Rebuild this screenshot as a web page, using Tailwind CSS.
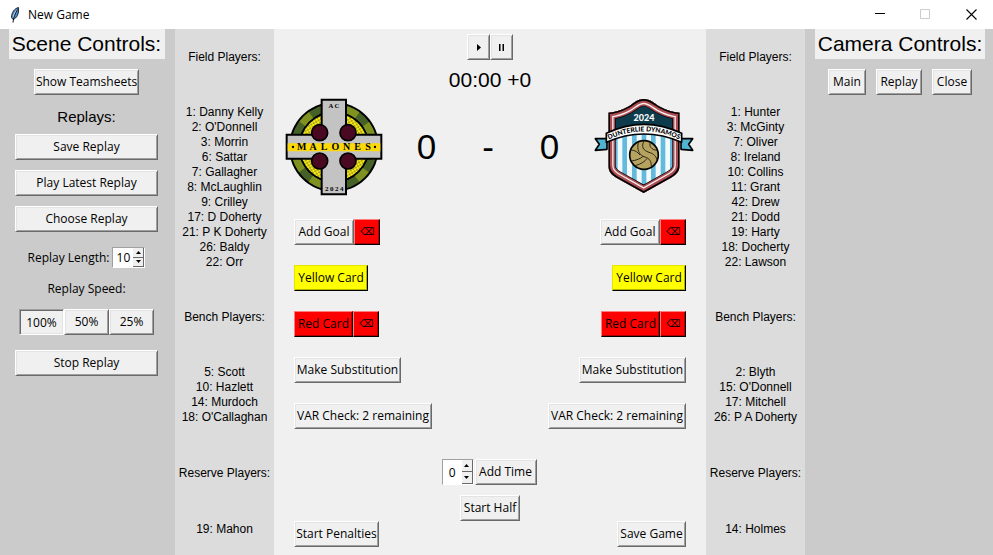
<!DOCTYPE html>
<html lang="en">
<head>
<meta charset="utf-8">
<meta name="viewport" content="width=device-width, initial-scale=1">
<title>New Game</title>
<script src="https://cdn.jsdelivr.net/npm/@tailwindcss/browser@4"></script>
</head>
<body class="flex min-h-screen flex-col bg-[#f0f0f0] font-['Open_Sans','Noto_Sans',sans-serif] text-xs text-black">

<!-- Window title bar -->
<header class="flex h-[29px] items-center bg-white">
  <svg class="ml-2 h-4 w-4" viewBox="0 0 16 16" aria-hidden="true">
    <path d="M10.500 .5C6.500 1.500 3.500 5.500 3.500 10.500L5 12.500C9 11 11 7 10.500 .5Z" fill="#4f86c6" stroke="#16263a" stroke-width="1"/>
    <path d="M9 3C6.500 6 5.500 9 5.200 11" fill="none" stroke="#b9dcf7" stroke-width="1.300"/>
    <path d="M9.500 2.500C7 7 5.500 10 5 15.500" fill="none" stroke="#111" stroke-width="1"/>
  </svg>
  <h1 class="ml-1 flex-1">New Game</h1>
  <button class="flex h-full w-[45px] items-center justify-center" aria-label="Minimize">
    <svg class="h-[11px] w-[11px]" viewBox="0 0 11 11"><path d="M0 4.500H10" stroke="#000"/></svg>
  </button>
  <button class="flex h-full w-[45px] items-center justify-center" aria-label="Maximize" disabled>
    <svg class="h-[11px] w-[11px]" viewBox="0 0 11 11"><path d="M.5 .5H9.500V9.500H.5Z" fill="none" stroke="#ccc"/></svg>
  </button>
  <button class="flex h-full w-[45px] items-center justify-center pl-0.5" aria-label="Close window">
    <svg class="h-[11px] w-[11px]" viewBox="0 0 11 11"><path d="M.5 .5L10.500 10.500M10.500 .5L.5 10.500" stroke="#000" stroke-width="1.100"/></svg>
  </button>
</header>

<main class="grid flex-1 grid-cols-[175px_99px_1fr_99px_188px]">

  <!-- Scene controls -->
  <section class="flex flex-col items-center bg-[#cbcbcb] pr-0.5">
    <h2 class="flex h-[30px] w-[156px] items-center justify-center whitespace-nowrap bg-[#f0f0f0] font-['Liberation_Sans',Arial,sans-serif] text-[21px] leading-[30px]">Scene Controls:</h2>
    <button class="mt-2.5 h-[26px] w-[105px] whitespace-nowrap border border-t-white border-l-white border-r-[#696969] border-b-[#696969] bg-[#f0f0f0] leading-none shadow-[inset_1px_1px_#e3e3e3,inset_-1px_-1px_#a0a0a0]">Show Teamsheets</button>
    <h3 class="mt-3 font-['Liberation_Sans',Arial,sans-serif] text-[15px] leading-5">Replays:</h3>
    <div class="mt-[7px] flex flex-col gap-2.5">
      <button class="h-[26px] w-[143px] border border-t-white border-l-white border-r-[#696969] border-b-[#696969] bg-[#f0f0f0] leading-none shadow-[inset_1px_1px_#e3e3e3,inset_-1px_-1px_#a0a0a0]">Save Replay</button>
      <button class="h-[26px] w-[143px] border border-t-white border-l-white border-r-[#696969] border-b-[#696969] bg-[#f0f0f0] leading-none shadow-[inset_1px_1px_#e3e3e3,inset_-1px_-1px_#a0a0a0]">Play Latest Replay</button>
      <button class="h-[26px] w-[143px] border border-t-white border-l-white border-r-[#696969] border-b-[#696969] bg-[#f0f0f0] leading-none shadow-[inset_1px_1px_#e3e3e3,inset_-1px_-1px_#a0a0a0]">Choose Replay</button>
    </div>
    <div class="mt-[15px] flex items-center gap-[3px]">
      <label for="length" class="whitespace-nowrap">Replay Length:</label>
      <div class="flex h-[21px] w-[33px] border border-t-[#a0a0a0] border-l-[#a0a0a0] border-r-white border-b-white bg-white">
        <input id="length" type="text" inputmode="numeric" value="10" class="w-5 min-w-0 text-center leading-none outline-none">
        <div class="flex w-[11px] flex-col">
          <button aria-label="Increase length" class="flex flex-1 items-center justify-center border-r border-b border-[#696969] bg-[#f0f0f0]"><svg class="h-[3px] w-[5px]" viewBox="0 0 5 3"><path d="M0 3L2.500 0L5 3Z"/></svg></button>
          <button aria-label="Decrease length" class="flex flex-1 items-center justify-center border-r border-b border-[#696969] bg-[#f0f0f0]"><svg class="h-[3px] w-[5px]" viewBox="0 0 5 3"><path d="M0 0L2.500 3L5 0Z"/></svg></button>
        </div>
      </div>
    </div>
    <h3 class="mt-[13px] leading-4">Replay Speed:</h3>
    <div class="mt-3 flex">
      <button aria-pressed="true" class="h-[26px] w-[45px] border border-t-[#a0a0a0] border-l-[#a0a0a0] border-r-white border-b-white bg-[#f0f0f0] pt-0.5 leading-none shadow-[inset_1px_1px_#696969,inset_-1px_-1px_#e3e3e3]">100%</button>
      <button aria-pressed="false" class="h-[26px] w-[45px] border border-t-white border-l-white border-r-[#696969] border-b-[#696969] bg-[#f0f0f0] leading-none shadow-[inset_1px_1px_#e3e3e3,inset_-1px_-1px_#a0a0a0]">50%</button>
      <button aria-pressed="false" class="h-[26px] w-[45px] border border-t-white border-l-white border-r-[#696969] border-b-[#696969] bg-[#f0f0f0] leading-none shadow-[inset_1px_1px_#e3e3e3,inset_-1px_-1px_#a0a0a0]">25%</button>
    </div>
    <button class="mt-[15px] h-[26px] w-[143px] border border-t-white border-l-white border-r-[#696969] border-b-[#696969] bg-[#f0f0f0] leading-none shadow-[inset_1px_1px_#e3e3e3,inset_-1px_-1px_#a0a0a0]">Stop Replay</button>
  </section>

  <!-- Home squad -->
  <section class="bg-[#dcdcdc] pt-[21px] text-center font-['Liberation_Sans',Arial,sans-serif] leading-[15px] whitespace-nowrap">
    <h3>Field Players:</h3>
    <ul class="mt-10">
      <li>1: Danny Kelly</li><li>2: O'Donnell</li><li>3: Morrin</li><li>6: Sattar</li><li>7: Gallagher</li><li>8: McLaughlin</li><li>9: Crilley</li><li>17: D Doherty</li><li>21: P K Doherty</li><li>26: Baldy</li><li>22: Orr</li>
    </ul>
    <h3 class="mt-10">Bench Players:</h3>
    <ul class="mt-10">
      <li>5: Scott</li><li>10: Hazlett</li><li>14: Murdoch</li><li>18: O'Callaghan</li>
    </ul>
    <h3 class="mt-[41px]">Reserve Players:</h3>
    <ul class="mt-[41px]"><li>19: Mahon</li></ul>
  </section>

  <!-- Match panel -->
  <section class="flex flex-col pt-[5px]">
    <div class="flex justify-center">
      <button aria-label="Start clock" class="flex h-[26px] w-[23px] items-center justify-center border border-t-white border-l-white border-r-[#696969] border-b-[#696969] bg-[#f0f0f0] shadow-[inset_1px_1px_#e3e3e3,inset_-1px_-1px_#a0a0a0]"><svg class="h-[7px] w-1" viewBox="0 0 4 7"><path d="M0 0L4 3.500L0 7Z"/></svg></button>
      <button aria-label="Pause clock" class="flex h-[26px] w-[23px] items-center justify-center border border-t-white border-l-white border-r-[#696969] border-b-[#696969] bg-[#f0f0f0] shadow-[inset_1px_1px_#e3e3e3,inset_-1px_-1px_#a0a0a0]"><svg class="h-[7px] w-[5px]" viewBox="0 0 5 7"><path d="M0 0H1.500V7H0ZM3.500 0H5V7H3.500Z"/></svg></button>
    </div>
    <p class="mt-2 text-center font-['Liberation_Sans',Arial,sans-serif] text-[21px] leading-6">00:00 +0</p>

    <div class="mt-[5px] flex items-center pr-3 pl-2.5">
      <svg class="h-[100px] w-[100px]" viewBox="27 21 300 300" role="img" aria-label="AC Malones crest">
        <defs>
          <pattern id="weave" width="12" height="12" patternUnits="userSpaceOnUse" patternTransform="rotate(15)">
            <rect width="12" height="12" fill="#ffec10"/>
            <path d="M0 0L12 12M12 0L0 12" stroke="#66722a" stroke-width="1.700"/>
          </pattern>
        </defs>
        <circle cx="177" cy="171" r="135"/>
        <circle cx="177" cy="171" r="118" fill="none" stroke="#466127" stroke-width="22"/>
        <circle cx="177" cy="171" r="118" fill="none" stroke="#7f921f" stroke-width="22" pathLength="20" stroke-dasharray="1 1"/>
        <circle cx="177" cy="171" r="104" fill="url(#weave)" stroke="#000" stroke-width="5"/>
        <path d="M140 29H213V134H319V206H213V313H140V206H35V134H140Z" fill="#c3c3c3" stroke="#000" stroke-width="6"/>
        <path d="M38 160H316V184H38Z" fill="#fbd90c"/>
        <g fill="#490a21" stroke="#000" stroke-width="5">
          <circle cx="134" cy="128" r="24"/><circle cx="219" cy="128" r="24"/>
          <circle cx="134" cy="213" r="24"/><circle cx="219" cy="213" r="24"/>
        </g>
        <circle cx="54" cy="171" r="3.500"/><circle cx="300" cy="171" r="3.500"/>
        <g font-family="Liberation Serif, serif" font-weight="700" text-anchor="middle">
          <text x="80 114 147 181 215 248 279" y="181" font-size="30">MALONES</text>
          <text x="168 186" y="53" font-size="20">AC</text>
          <text x="155 170 185 200" y="303" font-size="21">2024</text>
        </g>
      </svg>

      <div class="flex flex-1 items-center justify-center gap-[46px] pr-0.5 font-['Liberation_Sans',Arial,sans-serif] text-[35px] leading-10">
        <span>0</span><span>-</span><span>0</span>
      </div>

      <svg class="h-[100px] w-[100px]" viewBox="27 21 300 300" role="img" aria-label="Dunterlie Dynamos crest">
        <defs>
          <path id="shield" d="M176 27C196 27 207 40 225 50C243 60 262 66 284 68V226C284 244 274 254 258 263L176 309L94 263C78 254 70 244 70 226V68C92 66 111 60 129 50C147 40 156 27 176 27Z"/>
          <clipPath id="shieldClip"><use href="#shield"/></clipPath>
          <path id="arc" d="M68 150Q176 98 286 150"/>
        </defs>
        <g clip-path="url(#shieldClip)">
          <path d="M60 20H300V320H60Z" fill="#f4fafc"/>
          <path d="M84 110h14v200h-14zM112 110h14v200h-14zM141 110h14v200h-14zM170 110h14v200h-14zM198 110h14v200h-14zM227 110h14v200h-14zM255 110h14v200h-14z" fill="#62bbdc"/>
          <path d="M60 20H300V130H60Z" fill="#0e3b4c"/>
          <g fill="none">
            <use href="#shield" stroke="#000" stroke-width="44"/>
            <use href="#shield" stroke="#a94b50" stroke-width="40"/>
            <use href="#shield" stroke="#f5eeee" stroke-width="31"/>
            <use href="#shield" stroke="#a94b50" stroke-width="23"/>
            <use href="#shield" stroke="#000" stroke-width="10"/>
          </g>
        </g>
        <g fill="#50b4d2" stroke="#000" stroke-width="5" stroke-linejoin="round">
          <path d="M66 146H31L43 163L31 181L66 178Z"/>
          <path d="M288 146H323L311 163L323 181L288 178Z"/>
          <path d="M64 130Q176 76 290 130V157Q176 107 64 157Z" fill="#fff"/>
        </g>
        <g text-anchor="middle" font-family="Lato, sans-serif" font-weight="900">
          <text x="177" y="93" font-size="27" fill="#fff">2024</text>
          <text font-size="20"><textPath href="#arc" startOffset="50%">DUNTERLIE DYNAMOS</textPath></text>
        </g>
        <circle cx="177" cy="195" r="43" fill="#b7a360" stroke="#000" stroke-width="5"/>
        <g fill="none" stroke="#2d281b" stroke-width="3">
          <path d="M177 153C168 170 174 181 192 187C207 191 215 201 216 211"/>
          <path d="M160 157C155 179 162 196 180 201C193 205 199 213 199 229"/>
          <path d="M137 180C151 180 158 187 165 195M139 213C154 211 167 206 174 199M150 227C168 222 181 214 186 205"/>
          <path d="M196 157C192 169 198 179 216 181"/>
        </g>
      </svg>
    </div>

    <div class="mt-[22px] flex justify-between px-5">
      <div class="flex flex-col items-start gap-5">
        <div class="flex">
          <button class="h-[26px] w-[60px] whitespace-nowrap border border-t-white border-l-white border-r-[#696969] border-b-[#696969] bg-[#f0f0f0] leading-none shadow-[inset_1px_1px_#e3e3e3,inset_-1px_-1px_#a0a0a0]">Add Goal</button>
          <button aria-label="Remove home goal" class="h-[26px] w-[26px] border border-t-[#ff7f7f] border-l-[#ff7f7f] border-r-black border-b-black bg-[#ff0000] font-['DejaVu_Sans',sans-serif] text-[10px] leading-none shadow-[inset_-1px_-1px_#b20000]">⌫</button>
        </div>
        <button class="h-[26px] w-[74px] whitespace-nowrap border border-t-[#e5e500] border-l-[#e5e500] border-r-black border-b-black bg-[#ffff00] leading-none shadow-[inset_-1px_-1px_#b2b200]">Yellow Card</button>
        <div class="flex">
          <button class="h-[26px] w-[59px] whitespace-nowrap border border-t-[#ff7f7f] border-l-[#ff7f7f] border-r-black border-b-black bg-[#ff0000] leading-none shadow-[inset_-1px_-1px_#b20000]">Red Card</button>
          <button aria-label="Remove home red card" class="h-[26px] w-[26px] border border-t-[#ff7f7f] border-l-[#ff7f7f] border-r-black border-b-black bg-[#ff0000] font-['DejaVu_Sans',sans-serif] text-[10px] leading-none shadow-[inset_-1px_-1px_#b20000]">⌫</button>
        </div>
        <button class="h-[26px] w-[107px] whitespace-nowrap border border-t-white border-l-white border-r-[#696969] border-b-[#696969] bg-[#f0f0f0] leading-none shadow-[inset_1px_1px_#e3e3e3,inset_-1px_-1px_#a0a0a0]">Make Substitution</button>
        <button class="h-[26px] w-[138px] whitespace-nowrap border border-t-white border-l-white border-r-[#696969] border-b-[#696969] bg-[#f0f0f0] leading-none shadow-[inset_1px_1px_#e3e3e3,inset_-1px_-1px_#a0a0a0]">VAR Check: 2 remaining</button>
      </div>
      <div class="flex flex-col items-end gap-5">
        <div class="flex">
          <button class="h-[26px] w-[60px] whitespace-nowrap border border-t-white border-l-white border-r-[#696969] border-b-[#696969] bg-[#f0f0f0] leading-none shadow-[inset_1px_1px_#e3e3e3,inset_-1px_-1px_#a0a0a0]">Add Goal</button>
          <button aria-label="Remove away goal" class="h-[26px] w-[26px] border border-t-[#ff7f7f] border-l-[#ff7f7f] border-r-black border-b-black bg-[#ff0000] font-['DejaVu_Sans',sans-serif] text-[10px] leading-none shadow-[inset_-1px_-1px_#b20000]">⌫</button>
        </div>
        <button class="h-[26px] w-[74px] whitespace-nowrap border border-t-[#e5e500] border-l-[#e5e500] border-r-black border-b-black bg-[#ffff00] leading-none shadow-[inset_-1px_-1px_#b2b200]">Yellow Card</button>
        <div class="flex">
          <button class="h-[26px] w-[59px] whitespace-nowrap border border-t-[#ff7f7f] border-l-[#ff7f7f] border-r-black border-b-black bg-[#ff0000] leading-none shadow-[inset_-1px_-1px_#b20000]">Red Card</button>
          <button aria-label="Remove away red card" class="h-[26px] w-[26px] border border-t-[#ff7f7f] border-l-[#ff7f7f] border-r-black border-b-black bg-[#ff0000] font-['DejaVu_Sans',sans-serif] text-[10px] leading-none shadow-[inset_-1px_-1px_#b20000]">⌫</button>
        </div>
        <button class="h-[26px] w-[107px] whitespace-nowrap border border-t-white border-l-white border-r-[#696969] border-b-[#696969] bg-[#f0f0f0] leading-none shadow-[inset_1px_1px_#e3e3e3,inset_-1px_-1px_#a0a0a0]">Make Substitution</button>
        <button class="h-[26px] w-[138px] whitespace-nowrap border border-t-white border-l-white border-r-[#696969] border-b-[#696969] bg-[#f0f0f0] leading-none shadow-[inset_1px_1px_#e3e3e3,inset_-1px_-1px_#a0a0a0]">VAR Check: 2 remaining</button>
      </div>
    </div>

    <div class="mt-[30px] flex justify-center gap-px pr-0.5">
      <div class="flex h-[26px] w-8 border border-t-[#a0a0a0] border-l-[#a0a0a0] border-r-white border-b-white bg-white">
        <input type="text" inputmode="numeric" aria-label="Added minutes" value="0" class="w-5 min-w-0 text-center leading-none outline-none">
        <div class="flex w-[11px] flex-col">
          <button aria-label="Increase minutes" class="flex flex-1 items-center justify-center border-r border-b border-[#696969] bg-[#f0f0f0]"><svg class="h-[3px] w-[5px]" viewBox="0 0 5 3"><path d="M0 3L2.500 0L5 3Z"/></svg></button>
          <button aria-label="Decrease minutes" class="flex flex-1 items-center justify-center border-r border-b border-[#696969] bg-[#f0f0f0]"><svg class="h-[3px] w-[5px]" viewBox="0 0 5 3"><path d="M0 0L2.500 3L5 0Z"/></svg></button>
        </div>
      </div>
      <button class="h-[26px] w-[62px] whitespace-nowrap border border-t-white border-l-white border-r-[#696969] border-b-[#696969] bg-[#f0f0f0] leading-none shadow-[inset_1px_1px_#e3e3e3,inset_-1px_-1px_#a0a0a0]">Add Time</button>
    </div>
    <button class="mt-2.5 h-[26px] w-[60px] self-center whitespace-nowrap border border-t-white border-l-white border-r-[#696969] border-b-[#696969] bg-[#f0f0f0] leading-none shadow-[inset_1px_1px_#e3e3e3,inset_-1px_-1px_#a0a0a0]">Start Half</button>
    <div class="flex justify-between px-5 pb-2">
      <button class="h-[26px] w-[85px] whitespace-nowrap border border-t-white border-l-white border-r-[#696969] border-b-[#696969] bg-[#f0f0f0] leading-none shadow-[inset_1px_1px_#e3e3e3,inset_-1px_-1px_#a0a0a0]">Start Penalties</button>
      <button class="h-[26px] w-[69px] whitespace-nowrap border border-t-white border-l-white border-r-[#696969] border-b-[#696969] bg-[#f0f0f0] leading-none shadow-[inset_1px_1px_#e3e3e3,inset_-1px_-1px_#a0a0a0]">Save Game</button>
    </div>
  </section>

  <!-- Away squad -->
  <section class="bg-[#dcdcdc] pt-[21px] text-center font-['Liberation_Sans',Arial,sans-serif] leading-[15px] whitespace-nowrap">
    <h3>Field Players:</h3>
    <ul class="mt-10">
      <li>1: Hunter</li><li>3: McGinty</li><li>7: Oliver</li><li>8: Ireland</li><li>10: Collins</li><li>11: Grant</li><li>42: Drew</li><li>21: Dodd</li><li>19: Harty</li><li>18: Docherty</li><li>22: Lawson</li>
    </ul>
    <h3 class="mt-10">Bench Players:</h3>
    <ul class="mt-10">
      <li>2: Blyth</li><li>15: O'Donnell</li><li>17: Mitchell</li><li>26: P A Doherty</li>
    </ul>
    <h3 class="mt-[41px]">Reserve Players:</h3>
    <ul class="mt-[41px]"><li>14: Holmes</li></ul>
  </section>

  <!-- Camera controls -->
  <section class="flex flex-col items-center bg-[#cbcbcb] pl-0.5">
    <h2 class="flex h-[30px] w-[170px] items-center justify-center whitespace-nowrap bg-[#f0f0f0] font-['Liberation_Sans',Arial,sans-serif] text-[21px] leading-[30px]">Camera Controls:</h2>
    <div class="mt-2.5 flex gap-2.5">
      <button class="h-[26px] w-[38px] whitespace-nowrap border border-t-white border-l-white border-r-[#696969] border-b-[#696969] bg-[#f0f0f0] leading-none shadow-[inset_1px_1px_#e3e3e3,inset_-1px_-1px_#a0a0a0]">Main</button>
      <button class="h-[26px] w-[46px] whitespace-nowrap border border-t-white border-l-white border-r-[#696969] border-b-[#696969] bg-[#f0f0f0] leading-none shadow-[inset_1px_1px_#e3e3e3,inset_-1px_-1px_#a0a0a0]">Replay</button>
      <button class="h-[26px] w-10 whitespace-nowrap border border-t-white border-l-white border-r-[#696969] border-b-[#696969] bg-[#f0f0f0] leading-none shadow-[inset_1px_1px_#e3e3e3,inset_-1px_-1px_#a0a0a0]">Close</button>
    </div>
  </section>
</main>
</body>
</html>
